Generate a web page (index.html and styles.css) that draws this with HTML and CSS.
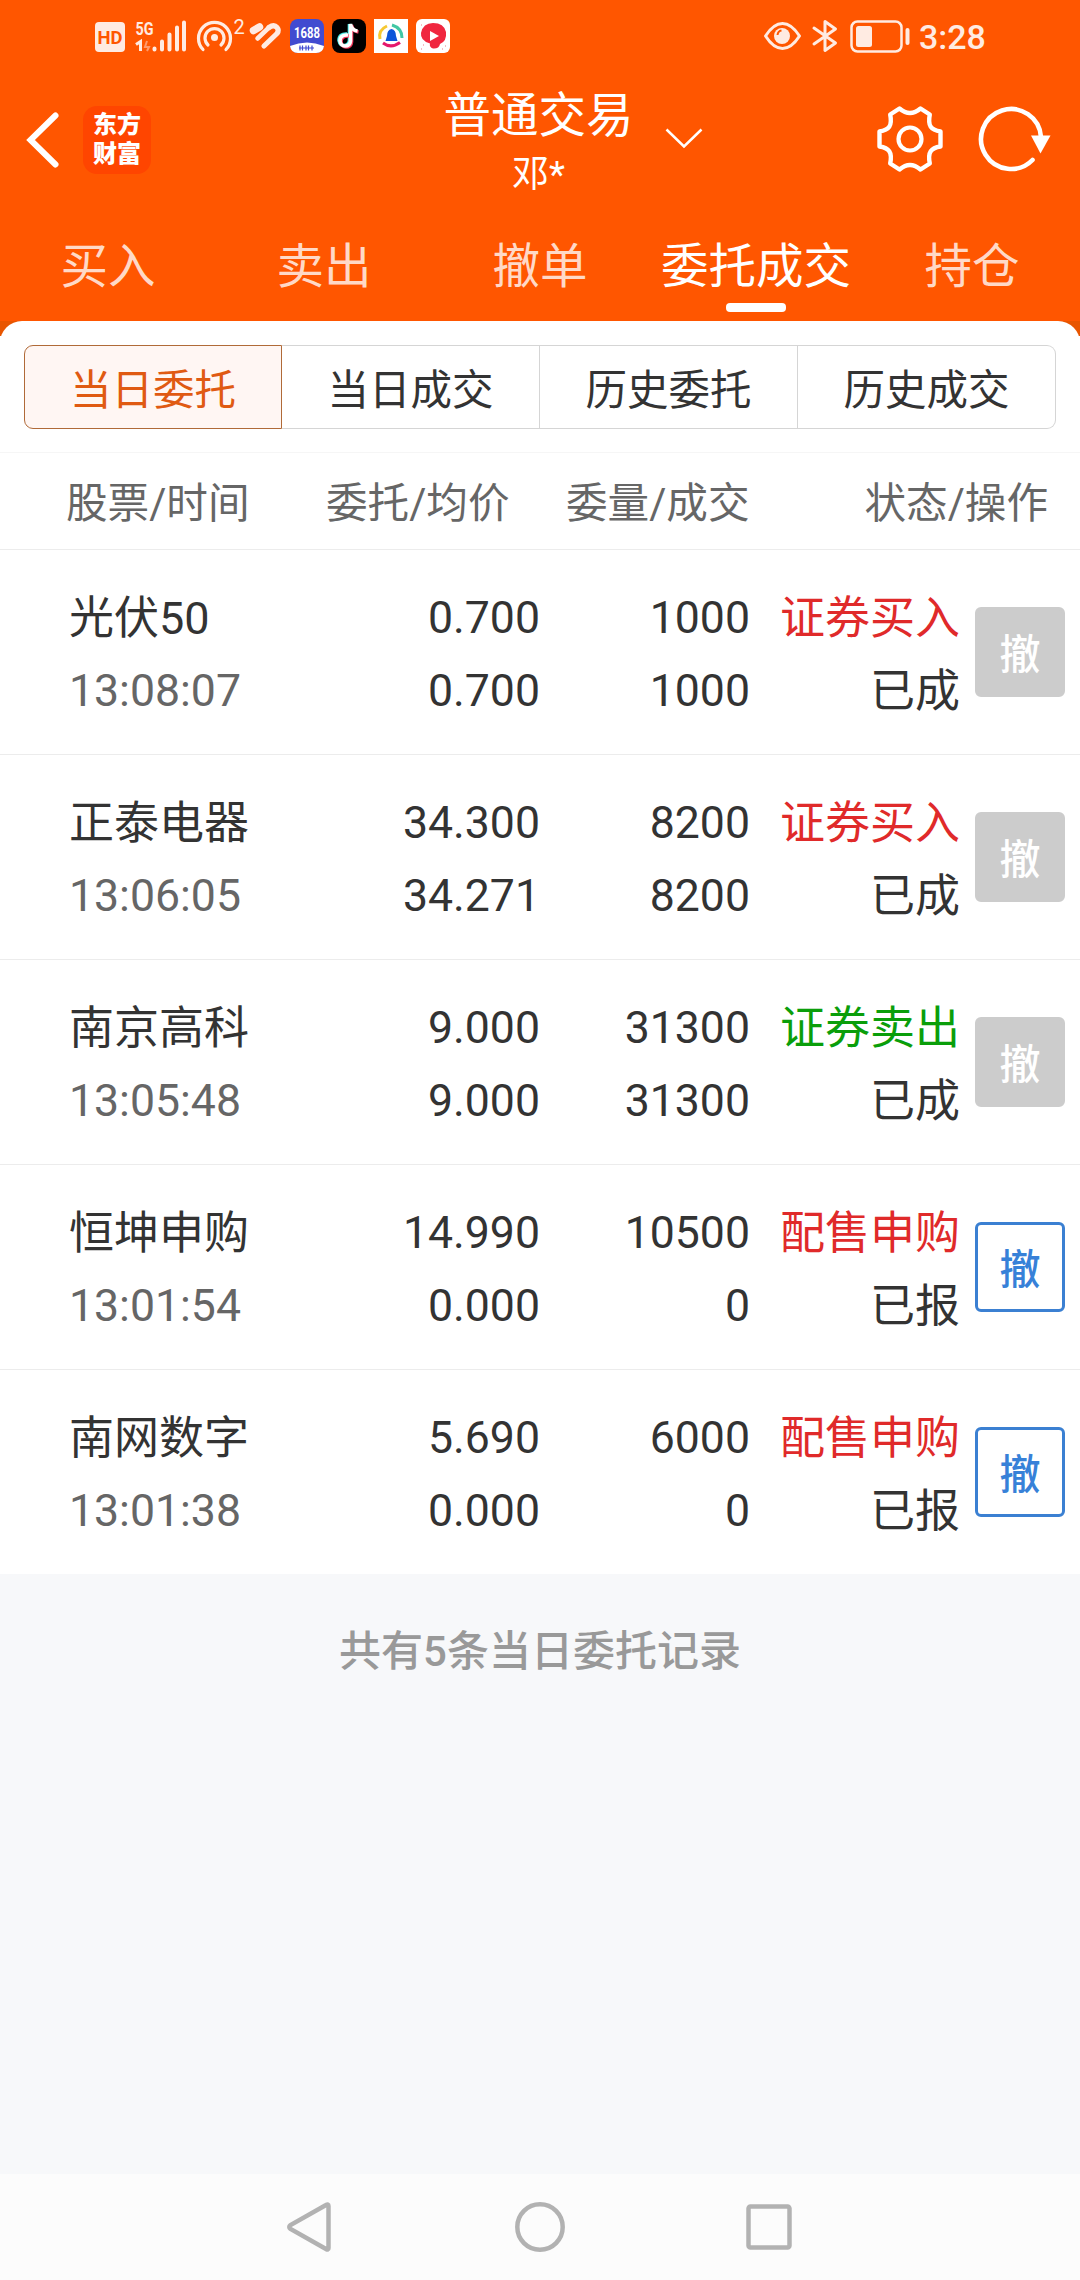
FILE: index.html
```html
<!DOCTYPE html>
<html lang="zh-CN">
  <head>
    <meta charset="UTF-8" />
    <meta name="viewport" content="width=device-width, initial-scale=1.0" />
    <title>普通交易 - 委托成交</title>
    <link rel="stylesheet" href="styles.css">
  </head>
  <body>
    <header class="top">
      <div class="status-bar">
        <svg class="status-icons" width="360" height="40" viewBox="92 16 360 40">
          <!-- HD + signal -->
          <rect x="95" y="22" width="30" height="30" rx="4" fill="#ffebe2" />
          <text x="110" y="44" class="hd-text" textLength="25" lengthAdjust="spacingAndGlyphs">HD</text>
          <text x="135.5" y="34.5" class="net-text" textLength="18" lengthAdjust="spacingAndGlyphs">5G</text>
          <path d="M136 44.5l4.5-3v9.5" fill="none" stroke="#ffebe2" stroke-width="3" />
          <path d="M147 41l-2 6h4l-2 4" fill="none" stroke="#ff9a6b" stroke-width="2" />
          <path d="M154.500 49.500v-1M162 49.500v-8M169.500 49.500v-15M177 49.500v-22M184 49.500v-27" fill="none" stroke="#ffebe2" stroke-width="4" stroke-linecap="round" />
          <!-- hotspot -->
          <g fill="none" stroke="#ffebe2" stroke-width="3.2" stroke-linecap="round">
            <path d="M203 49.500A16 16 0 1 1 226 49.500" />
            <path d="M208 45A9.500 9.500 0 1 1 221 45" />
          </g>
          <circle cx="214.5" cy="37.5" r="3.5" fill="#ffebe2" />
          <text x="233.5" y="34" class="sup-text">2</text>
          <!-- health -->
          <g fill="none" stroke="#ffebe2" stroke-linecap="round" stroke-linejoin="round">
            <path d="M253.500 30.500l6-3.500" stroke-width="7.5" />
            <path d="M257.500 38.500l11.500-11" stroke-width="4.5" />
            <path d="M269 27.500q5-3.500 8 0q2.500 3 0 6l-13 12.500" stroke-width="5.2" />
          </g>
          <!-- 1688 -->
          <rect x="290" y="19" width="34" height="34" rx="8" fill="#414bd0" />
          <path d="M290 46q17-7 34 0q-1 7-8 7h-18q-7 0-8-7z" fill="#fff" />
          <text x="307" y="38" class="ali-text" textLength="26" lengthAdjust="spacingAndGlyphs">1688</text>
          <path d="M300 45.500v5M302.500 45.500v5M306 45.500v5M308.500 45.500v5M312 45.500v5M299 48h15" stroke="#414bd0" stroke-width="1.2" />
          <!-- tiktok -->
          <rect x="332" y="19" width="34" height="34" rx="8" fill="#000" />
          <g fill="none" stroke-width="3.6">
            <path d="M347 34q-8-.5-8 6.500q1 5 5 5q5 0 5.500-5V24q1 6 7 7" stroke="#4ff0ea" />
            <path d="M349 36q-8-.5-8 6q1 5 5 5q5 0 5.500-5V25q1 6 7 7" stroke="#f4365c" />
            <path d="M348 35q-8-.5-8 6q1 5 5 5q5 0 5.500-5V24q1 6 7 7" stroke="#fff" />
          </g>
          <!-- bell -->
          <rect x="374" y="19" width="34" height="34" fill="#fff" />
          <g fill="none" stroke-width="3">
            <path d="M380 39q-2-9 7-13" stroke="#f6c832" />
            <path d="M392 25q10 3 10 13" stroke="#41c7a4" />
            <path d="M383 43q8 6 17-.5" stroke="#e5186c" />
          </g>
          <path d="M391.500 29q4.500 1 4.500 7l1.500 5h-12l1.500-5q0-6 4.500-7z" fill="#0d55d9" />
          <!-- video -->
          <rect x="416" y="19" width="34" height="34" rx="6" fill="#fff" />
          <path d="M433 23q11 0 13 9q1 9-6 12q-1 5-7 4.500q-4-1.500-3-5q-10-3-9-10.500q2-10 12-10z" fill="#f0263f" />
          <path d="M430 31l9 5l-9 5z" fill="#fff" />
          <path d="M421 25h1M445 46h1M423 45h1M421 49h1M442 49h1" stroke="#f5a5b0" stroke-width="1.5" />
        </svg>
        <div class="status-right">
          <svg width="148" height="36" viewBox="763 18 148 36">
            <g fill="none" stroke="#ffebe2" stroke-width="3" stroke-linejoin="round" stroke-linecap="round">
              <path d="M765.500 36q8-12.500 17-12.500t17 12.500q-8 12.500-17 12.500t-17-12.500z" />
              <path d="M814 28l21.500 15L825 50.500v-29L835.500 29L814 44" />
              <rect x="851.5" y="21.5" width="50" height="30" rx="6" stroke-width="2.5" />
            </g>
            <circle cx="782" cy="36" r="8" fill="#ffebe2" />
            <path d="M777.500 35q.5-4 4-4.500" fill="none" stroke="#ff5600" stroke-width="2" />
            <rect x="856" y="26" width="16" height="21" rx="2.5" fill="#ffebe2" />
            <rect x="905.5" y="28" width="4" height="17" rx="2" fill="#ffebe2" />
          </svg>
          <span class="clock">3:28</span>
        </div>
      </div>

      <div class="title-bar">
        <div class="title-left">
          <svg width="36" height="60" viewBox="0 0 36 60">
            <path d="M30.500 5.500L5.500 30L30.500 54.500" fill="none" stroke="#fff" stroke-width="6" stroke-linecap="round" />
          </svg>
          <div class="brand"><span>东方</span><span>财富</span></div>
        </div>
        <div class="title">
          <h1>普通交易</h1>
          <p>邓*</p>
        </div>
        <div class="title-right">
          <svg class="arrow-down" width="38" height="22" viewBox="0 0 38 22">
            <path d="M1.500 1.500L19 18.500L36.500 1.500" fill="none" stroke="#fff" stroke-width="2.5" />
          </svg>
          <svg class="gear" width="70" height="70" viewBox="-35 -35 70 70">
            <path d="M-10.500-30.500Q0-21.500 10.500-30.500L19.800-24.500C17.500-13 21-9 30.500-7.500V7.500C21 9 17.500 13 19.800 24.500L10.500 30.500Q0 21.500-10.500 30.500L-19.800 24.500C-17.500 13-21 9-30.500 7.500V-7.500C-21-9-17.500-13-19.800-24.500Z" fill="none" stroke="#fff" stroke-width="4.4" stroke-linejoin="round" />
            <circle r="11.5" fill="none" stroke="#fff" stroke-width="4.2" />
          </svg>
          <svg width="74" height="70" viewBox="-33 -35 74 70">
            <path d="M21.500 21A30 30 0 1 1 30-2" fill="none" stroke="#fff" stroke-width="4.6" stroke-linecap="round" />
            <path d="M20-3.500H39.500L29.500 14.500Z" fill="#fff" />
          </svg>
        </div>
      </div>

      <nav class="tabs">
        <a>买入</a>
        <a>卖出</a>
        <a>撤单</a>
        <a class="active">委托成交</a>
        <a>持仓</a>
      </nav>
    </header>

    <main>
      <section class="sheet">
        <div class="segments">
          <button class="active">当日委托</button>
          <button>当日成交</button>
          <button>历史委托</button>
          <button>历史成交</button>
        </div>

        <div class="row head">
          <span>股票/时间</span>
          <span>委托/均价</span>
          <span>委量/成交</span>
          <span class="last">状态/操作</span>
        </div>

        <div class="row">
          <div class="name">光伏50<small>13:08:07</small></div>
          <div class="num">0.700<br>0.700</div>
          <div class="num">1000<br>1000</div>
          <div class="num state"><span class="buy">证券买入</span><br>已成</div>
          <button class="cancel" disabled>撤</button>
        </div>
        <div class="row">
          <div class="name">正泰电器<small>13:06:05</small></div>
          <div class="num">34.300<br>34.271</div>
          <div class="num">8200<br>8200</div>
          <div class="num state"><span class="buy">证券买入</span><br>已成</div>
          <button class="cancel" disabled>撤</button>
        </div>
        <div class="row">
          <div class="name">南京高科<small>13:05:48</small></div>
          <div class="num">9.000<br>9.000</div>
          <div class="num">31300<br>31300</div>
          <div class="num state"><span class="sell">证券卖出</span><br>已成</div>
          <button class="cancel" disabled>撤</button>
        </div>
        <div class="row">
          <div class="name">恒坤申购<small>13:01:54</small></div>
          <div class="num">14.990<br>0.000</div>
          <div class="num">10500<br>0</div>
          <div class="num state"><span class="buy">配售申购</span><br>已报</div>
          <button class="cancel">撤</button>
        </div>
        <div class="row">
          <div class="name">南网数字<small>13:01:38</small></div>
          <div class="num">5.690<br>0.000</div>
          <div class="num">6000<br>0</div>
          <div class="num state"><span class="buy">配售申购</span><br>已报</div>
          <button class="cancel">撤</button>
        </div>
      </section>
    </main>

    <p class="summary">共有5条当日委托记录</p>

    <footer class="nav-bar">
      <svg width="50" height="54" viewBox="0 0 50 54">
        <path d="M41 5Q43.500 3.500 43.500 6V48Q43.500 50.500 41 49L5.500 29Q3 27 5.500 25Z" fill="none" stroke="#b2b2b2" stroke-width="4.5" />
      </svg>
      <svg width="54" height="54" viewBox="0 0 54 54">
        <circle cx="27" cy="27" r="22.7" fill="none" stroke="#b2b2b2" stroke-width="4.5" />
      </svg>
      <svg width="50" height="54" viewBox="0 0 50 54">
        <rect x="4.5" y="6.5" width="41" height="41" rx="2" fill="none" stroke="#b2b2b2" stroke-width="4.5" />
      </svg>
    </footer>
  </body>
</html>
```
FILE: styles.css
```css
* {
  box-sizing: border-box;
}

body {
  margin: 0;
  height: 2280px;
  display: flex;
  flex-direction: column;
  font-family: Roboto, "Noto Sans CJK SC", sans-serif;
  background-color: #f7f8fa;
  color: #333;
}

svg {
  display: block;
}

h1,
p {
  margin: 0;
  font-weight: 400;
}

button {
  font-family: inherit;
  padding: 0;
}

/* header */
.top {
  height: 321px;
  background-color: #ff5600;
  color: #fff;
}

.status-bar {
  height: 75px;
  padding: 0 95px 0 92px;
  display: flex;
  align-items: flex-start;
  justify-content: space-between;
}

.status-icons {
  margin-top: 16px;
}

.status-icons text {
  font-family: Roboto, sans-serif;
  fill: #ffebe2;
}

.status-icons .hd-text {
  font-size: 19px;
  font-weight: 700;
  fill: #ff5600;
  text-anchor: middle;
}

.status-icons .net-text {
  font-size: 19px;
  font-weight: 700;
}

.status-icons .sup-text {
  font-size: 20px;
}

.status-icons .ali-text {
  font-size: 15px;
  font-weight: 700;
  fill: #fff;
  text-anchor: middle;
}

.status-right {
  display: flex;
  margin-top: 18px;
}

.clock {
  margin-left: 8px;
  width: 66px;
  font-size: 34px;
  font-weight: 500;
  line-height: 38px;
  color: #ffebe2;
}

.title-bar {
  height: 129px;
  padding: 0 28px 0 25px;
  display: grid;
  grid-template-columns: 1fr 190px 1fr;
}

.title-left {
  display: flex;
  align-items: center;
  height: 129px;
}

.brand {
  display: flex;
  flex-direction: column;
  justify-content: center;
  align-items: center;
  width: 68px;
  height: 68px;
  margin-left: 22px;
  border-radius: 14px;
  background-color: #ff4500;
  font-size: 24px;
  font-weight: 900;
  line-height: 29px;
}

.title {
  text-align: center;
  white-space: nowrap;
}

.title h1 {
  font-size: 47.5px;
  line-height: 60px;
  padding-top: 11px;
}

.title p {
  font-size: 37px;
  line-height: 50px;
  padding-top: 4px;
}

.title-right {
  display: flex;
  align-items: center;
  height: 127px;
}

.arrow-down {
  margin-left: 31px;
}

.gear {
  margin-left: auto;
  margin-right: 33px;
}

.tabs {
  display: grid;
  grid-template-columns: repeat(5, 1fr);
  height: 117px;
}

.tabs a {
  display: flex;
  flex-direction: column;
  align-items: center;
  padding-top: 33px;
  font-size: 47.5px;
  line-height: 60px;
  color: #ffd9c7;
}

.tabs .active {
  color: #fff;
}

.tabs .active::after {
  content: "";
  width: 60px;
  height: 9px;
  margin-top: 6px;
  border-radius: 4px;
  background-color: #fff;
}

/* list */
main {
  background: linear-gradient(#e85500 15px, #fff 15px);
}

.sheet {
  background-color: #fff;
  border-radius: 22px 22px 0 0;
  padding-top: 24px;
}

.segments {
  display: flex;
  height: 84px;
  margin: 0 24px 23px;
}

.segments button {
  width: 258px;
  border: 1px solid #d5d5d5;
  border-left-width: 0;
  background-color: #fff;
  color: #333;
  font-size: 41.5px;
}

.segments button:first-child {
  border-left-width: 1px;
  border-radius: 9px 0 0 9px;
}

.segments button:last-child {
  border-radius: 0 9px 9px 0;
}

.segments .active {
  border-color: #b06a38;
  background-color: #fff6f3;
  color: #e05a12;
}

.row {
  display: grid;
  grid-template-columns: 260px 210px 210px 210px 90px;
  height: 205px;
  padding-left: 70px;
  padding-top: 32px;
  border-bottom: 1px solid #ececec;
  font-size: 44.6px;
  line-height: 73px;
}

.row:last-child {
  height: 204px;
  border-bottom: none;
}

.head {
  grid-template-columns: 260px 240px 240px 242px;
  height: 98px;
  padding: 14px 0 0 66px;
  border-top: 1px solid #f6f6f6;
  font-size: 41.6px;
  color: #666;
}

.head .last {
  text-align: right;
}

.name {
  margin-left: -1px;
  font-size: 45px;
}

.name small {
  display: block;
  font-size: 44.6px;
  color: #666;
}

.num {
  text-align: right;
}

.state {
  font-size: 45px;
}

.buy {
  color: #e02a2a;
}

.sell {
  color: #0a9e0a;
}

.cancel {
  width: 90px;
  height: 90px;
  margin: 25px 0 0 15px;
  padding-bottom: 2px;
  border: 3px solid #3b80d2;
  border-radius: 6px;
  background-color: #fff;
  color: #3781d8;
  font-size: 41px;
  font-weight: 500;
}

.cancel:disabled {
  border-color: #ccc;
  background-color: #ccc;
  color: #fff;
}

.summary {
  margin-top: 48px;
  text-align: center;
  font-size: 42px;
  font-weight: 500;
  line-height: 60px;
  color: #999;
}

/* system navigation */
.nav-bar {
  display: flex;
  justify-content: space-between;
  height: 106px;
  margin-top: auto;
  padding: 26px 286px 0 285px;
  background-color: #fcfcfc;
}
```
